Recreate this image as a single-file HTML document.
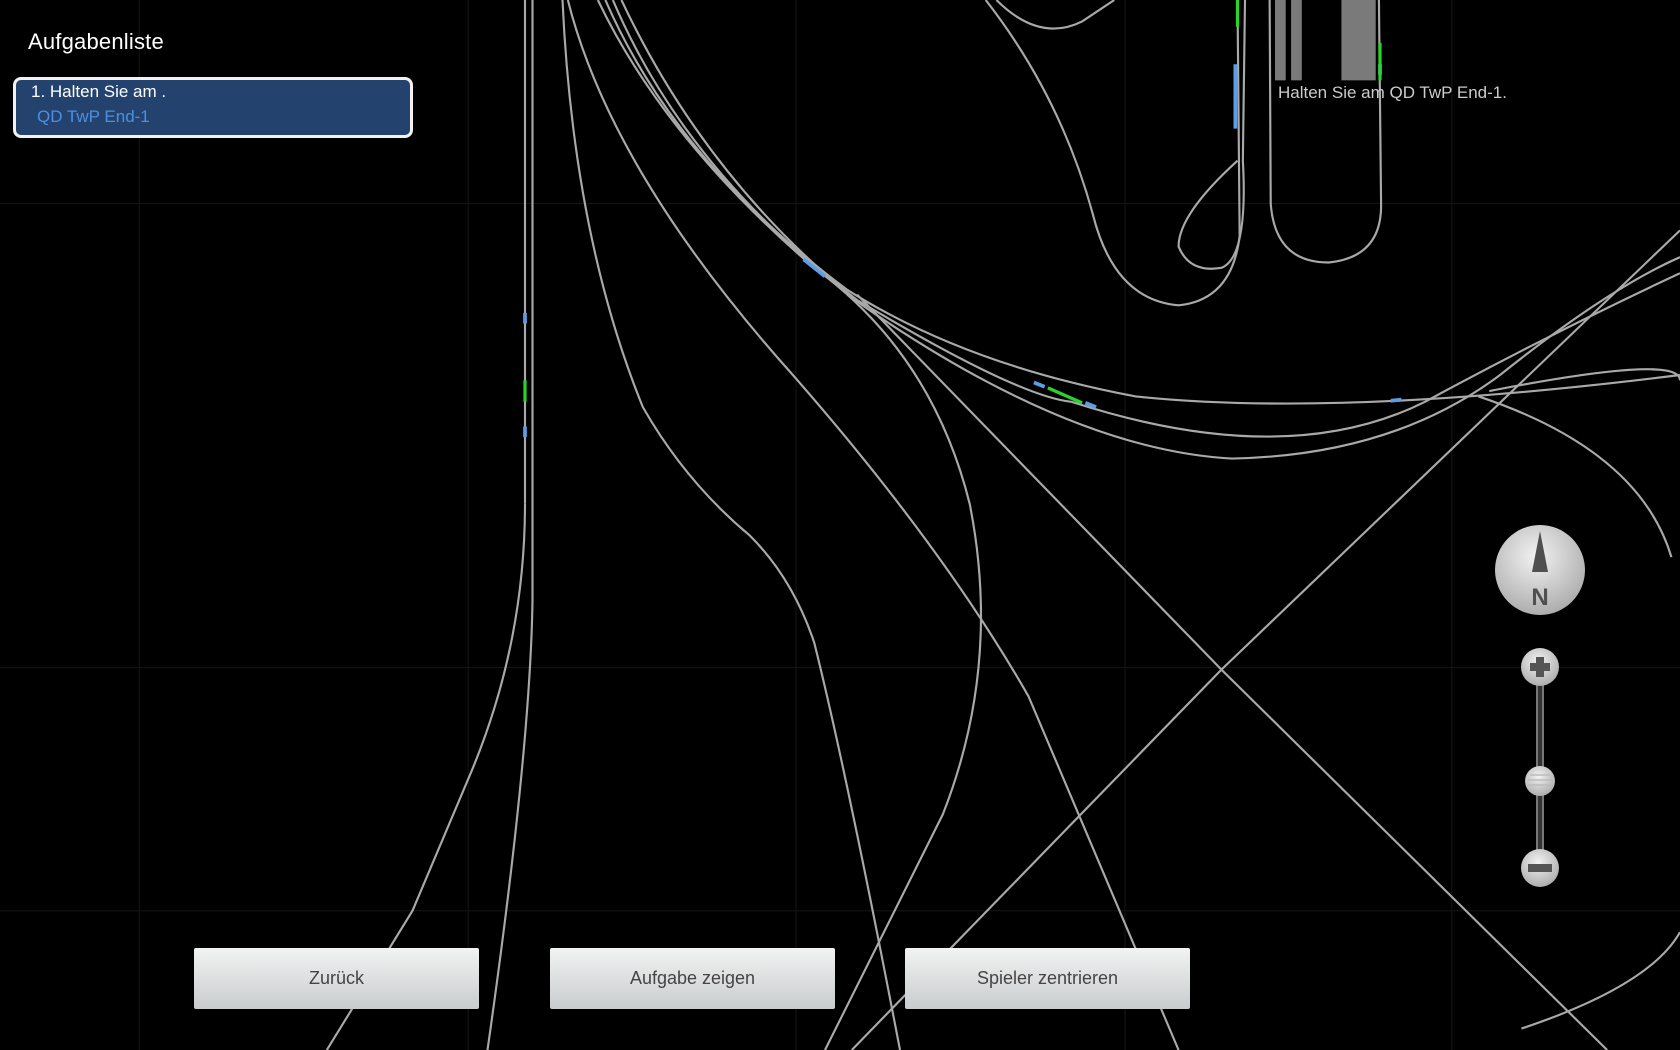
<!DOCTYPE html>
<html><head><meta charset="utf-8"><style>
html,body{margin:0;padding:0;background:#000;width:1680px;height:1050px;overflow:hidden;position:relative;font-family:"Liberation Sans",sans-serif}
svg.map{position:absolute;left:0;top:0}
.title{position:absolute;left:28px;top:29px;color:#fff;font-size:22px;letter-spacing:0.2px}
.box{position:absolute;left:13px;top:77px;width:400px;height:61px;background:#23426e;border:3px solid #f2f2f2;border-radius:8px;box-sizing:border-box}
.l1{position:absolute;left:31px;top:82px;color:#fff;font-size:17px}
.l2{position:absolute;left:37px;top:107px;color:#4f8fe0;font-size:17px}
.lbl{position:absolute;left:1278px;top:83px;color:#ccc;font-size:17px}
.btn{position:absolute;top:948px;width:285px;height:61px;background:linear-gradient(#f2f3f3,#c9cccd);border-radius:2px;color:#444;font-size:18px;text-align:center;line-height:61px}
</style></head><body>
<svg class="map" width="1680" height="1050" viewBox="0 0 1568 980" preserveAspectRatio="none">
<g stroke="#121212" stroke-width="1.2">
<line x1="437" y1="0" x2="437" y2="980"/><line x1="743" y1="0" x2="743" y2="980"/><line x1="1050" y1="0" x2="1050" y2="980"/><line x1="1355" y1="0" x2="1355" y2="980"/><line x1="130" y1="0" x2="130" y2="980"/>
<line x1="0" y1="190" x2="1568" y2="190"/><line x1="0" y1="623" x2="1568" y2="623"/><line x1="0" y1="850" x2="1568" y2="850"/>
</g>
<g fill="none" stroke="#a9a9a9" stroke-width="2">
<path d="M490 0 L490 470"/>
<path d="M497 0 L497 560 Q495 700 455 980"/>
<path d="M490 470 Q490 600 440 720 L385 850 L305 980"/>
<path d="M525 0 Q535 220 600 380 Q640 450 700 500 Q740 540 760 600 Q790 720 840 980"/>
<path d="M530 0 Q570 160 740 350 Q880 510 960 650 L1100 980"/>
<path d="M558 0 Q620 130 760 250 Q870 330 905 470 Q935 620 880 760 L770 980"/>
<path d="M565 0 Q630 150 790 270 Q900 340 1060 370 Q1250 390 1568 350"/>
<path d="M572 0 Q640 160 800 280 Q950 370 1000 375 Q1200 440 1330 375 Q1450 310 1568 255"/>
<path d="M580 0 Q660 170 805 285 Q1000 420 1150 428 Q1300 425 1400 350 Q1500 270 1568 240"/>
<path d="M800 275 L1140 625 L1500 980"/>
<path d="M1568 215 L1140 625 L795 980"/>
<path d="M1390 365 Q1568 330 1568 355"/>
<path d="M1380 370 Q1530 420 1560 520"/>
<path d="M1420 960 Q1540 920 1568 870"/>
<path d="M920 0 Q990 90 1020 200 Q1040 280 1100 285 Q1150 280 1157 220 L1155 0"/>
<path d="M1155 150 Q1100 200 1100 230 Q1110 255 1140 250 Q1165 240 1160 150 L1162 0"/>
<path d="M930 0 Q970 40 1010 20 L1040 0"/>
<path d="M1185 0 L1186 190 Q1190 245 1240 245 Q1290 240 1289 190 L1287 0"/>
</g>
<g fill="#7a7a7a"><rect x="1190" y="0" width="10" height="75"/><rect x="1205" y="0" width="10" height="75"/><rect x="1252" y="0" width="32" height="75"/></g>
<g stroke="#5a9ee8" stroke-width="3.5"><line x1="490" y1="292" x2="490" y2="302"/><line x1="490" y1="398" x2="490" y2="408"/><line x1="750" y1="242" x2="770" y2="258"/><line x1="965" y1="357" x2="975" y2="361"/><line x1="1013" y1="376" x2="1023" y2="380"/><line x1="1298" y1="374" x2="1308" y2="373"/><line x1="1153" y1="60" x2="1153" y2="120"/><line x1="1288" y1="60" x2="1288" y2="70"/></g>
<g stroke="#27d52c" stroke-width="3"><line x1="490" y1="355" x2="490" y2="375"/><line x1="978" y1="362" x2="1010" y2="376"/><line x1="1155" y1="0" x2="1155" y2="25"/><line x1="1288" y1="40" x2="1288" y2="75"/></g>
</svg>
<div class="title">Aufgabenliste</div>
<div class="box"></div>
<div class="l1">1. Halten Sie am .</div>
<div class="l2">QD TwP End-1</div>
<div class="lbl">Halten Sie am QD TwP End-1.</div>
<svg style="position:absolute;left:1490px;top:520px" width="100" height="370" viewBox="0 0 100 370">
<defs><radialGradient id="g" cx="45%" cy="35%" r="70%"><stop offset="0" stop-color="#f2f2f2"/><stop offset="1" stop-color="#a8a8a8"/></radialGradient></defs>
<circle cx="50" cy="50" r="45" fill="url(#g)"/>
<path d="M50 11 L42 52 L58 52 Z" fill="#505050"/>
<text x="50" y="85" font-family="Liberation Sans" font-weight="bold" font-size="24" fill="#505050" text-anchor="middle">N</text>
<rect x="46" y="147" width="8" height="201" fill="#777"/><rect x="48" y="147" width="4" height="201" fill="#333"/>
<circle cx="50" cy="147" r="19" fill="url(#g)"/>
<path d="M46 137h8v6h6v8h-6v6h-8v-6h-6v-8h6z" fill="#555"/>
<circle cx="50" cy="261" r="15" fill="url(#g)"/>
<g stroke="#bbb" stroke-width="1.5"><line x1="40" y1="255" x2="60" y2="255"/><line x1="38" y1="260" x2="62" y2="260"/><line x1="38" y1="265" x2="62" y2="265"/></g>
<circle cx="50" cy="348" r="19" fill="url(#g)"/>
<rect x="38" y="344" width="24" height="8" fill="#555"/>
</svg>
<div class="btn" style="left:194px">Zurück</div>
<div class="btn" style="left:550px">Aufgabe zeigen</div>
<div class="btn" style="left:905px">Spieler zentrieren</div>
</body></html>
